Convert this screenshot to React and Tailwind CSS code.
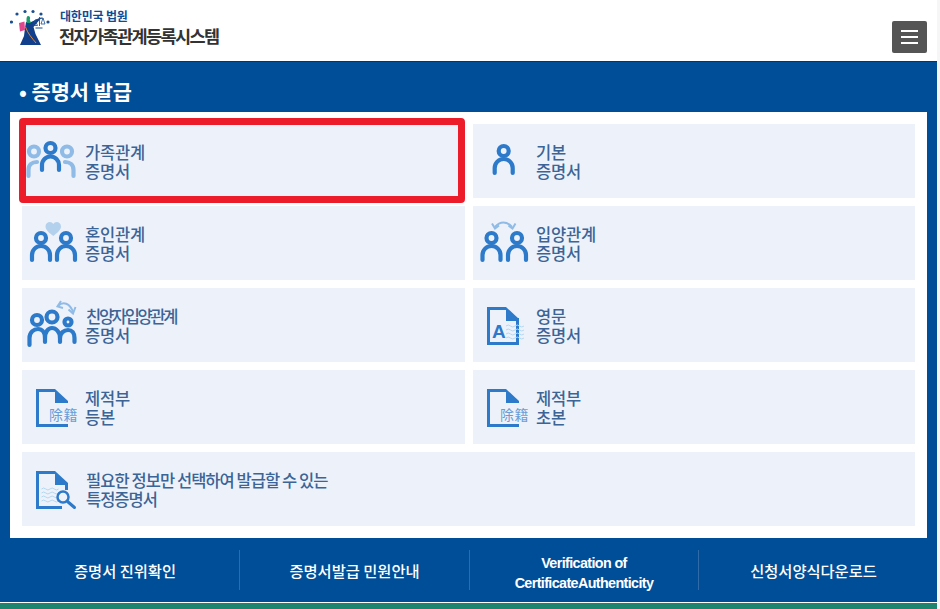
const DARK = "#2c7ac9";
const LIGHT = "#8fbbe6";
const KR = "font-['Malgun_Gothic','Noto_Sans_CJK_KR','Noto_Sans',sans-serif]";

// head ring + shoulders arch, top is the top of the head ring
function Person({ cx, top, color = DARK, r = 5, w = 9 }) {
  return (
    <g fill="none" stroke={color} strokeWidth="4.2" strokeLinecap="round">
      <circle cx={cx} cy={top + 7} r={r} />
      <path d={`M${cx - w} ${top + 29}V${top + 24}a${w} ${w} 0 0 1 ${w * 2} 0V${top + 29}`} />
    </g>
  );
}

function Doc({ right = false, end = 43 }) {
  return (
    <g>
      <path
        d={right ? `M30 20.5H12.5V55.5H41.5V30` : `M${end} 55.5H12.5V20.5H30`}
        fill="none"
        stroke={DARK}
        strokeWidth="3"
      />
      <path d="M30 19L43 31V33H30Z" fill={DARK} />
    </g>
  );
}

function Waves({ x, y, n = 4, w = 16 }) {
  const rows = Array.from({ length: n }, (_, i) => y + i * 4);
  return (
    <g fill="none" stroke="#b4d8f0" strokeWidth="1">
      {rows.map((ry) => (
        <path key={ry} d={`M${x} ${ry}q${w / 8} -2 ${w / 4} 0t${w / 4} 0t${w / 4} 0t${w / 4} 0`} />
      ))}
    </g>
  );
}

function Hanja() {
  return (
    <text x="24" y="50" fontSize="14" fill="#6a9dd6" letterSpacing="0.6" fontFamily="'Noto Sans CJK KR','Noto Sans CJK TC',sans-serif">
      除籍
    </text>
  );
}

const icons = {
  family: (
    <>
      <g fill="none" stroke={LIGHT} strokeWidth="4.2" strokeLinecap="round">
        <circle cx="9" cy="27.5" r="5" />
        <circle cx="42" cy="27.5" r="5" />
        <path d="M3.5 52V46C3.5 41 7 38 12 38" />
        <path d="M48.5 52V46C48.5 41 45 38 40 38" />
      </g>
      <Person cx={25.5} top={17} w={8.5} />
    </>
  ),
  basic: <Person cx={27.7} top={20} />,
  marriage: (
    <>
      <path d="M28.3 30C24 26.5 20.5 24 20.5 20.5C20.5 15.5 26.5 14.5 28.3 18C30 14.5 36 15.5 36 20.5C36 24 32.5 26.5 28.3 30Z" fill="#b3d0ec" />
      <Person cx={16} top={25} />
      <Person cx={41} top={25} />
    </>
  ),
  adopt: (
    <>
      <g fill="none" stroke={LIGHT} strokeWidth="2">
        <path d="M19 21C24 15 31 15 36 21" />
        <path d="M16 17.5L19 22.5L23 19.5" />
        <path d="M32.5 19.5L36.5 22.5L39.5 17.5" />
      </g>
      <Person cx={15.5} top={25} />
      <Person cx={41} top={25} />
    </>
  ),
  fullAdopt: (
    <>
      <g fill="none" stroke={LIGHT} strokeWidth="2">
        <path d="M33 18C38 13 45 15 48 24" />
        <path d="M36 13L32.5 18.5L38 20" />
        <path d="M43.5 21.5L48 25.5L50.5 19" />
      </g>
      <g fill="none" stroke={DARK} strokeWidth="4.2" strokeLinecap="round">
        <circle cx="12" cy="32" r="5" />
        <circle cx="27" cy="29" r="5.5" />
        <circle cx="43" cy="34" r="3.5" />
        <path d="M4.5 57V50C4.5 44 9 41 13 41C17 41 20 44 20 50V54" />
        <path d="M20 50C20 44 23 40 27 40C31 40 35 44 35 50V54" />
        <path d="M35 50C35 45 39 42 43 42C47 42 49.5 45 49.5 50V54" />
      </g>
    </>
  ),
  eng: (
    <>
      <Doc right />
      <text x="16" y="50" fontSize="19" fontWeight="700" fill={DARK} fontFamily="'Liberation Sans',sans-serif">
        A
      </text>
      <Waves x={30} y={38} w={18} />
    </>
  ),
  removed: (
    <>
      <Doc />
      <Hanja />
    </>
  ),
  special: (
    <>
      <Doc end={37} />
      <path d="M41.5 33V38" stroke={DARK} strokeWidth="3" />
      <Waves x={16.5} y={37} n={4} w={17} />
      <circle cx="38" cy="45" r="5.5" fill="#edf2fa" stroke={DARK} strokeWidth="2.5" />
      <path d="M42.5 49.5L49.5 55.5" stroke={DARK} strokeWidth="3" strokeLinecap="round" />
    </>
  ),
};

const cards = [
  { icon: "family", lines: ["가족관계", "증명서"], marked: true },
  { icon: "basic", lines: ["기본", "증명서"] },
  { icon: "marriage", lines: ["혼인관계", "증명서"] },
  { icon: "adopt", lines: ["입양관계", "증명서"] },
  { icon: "fullAdopt", lines: ["친양자입양관계", "증명서"], tight: true },
  { icon: "eng", lines: ["영문", "증명서"] },
  { icon: "removed", lines: ["제적부", "등본"] },
  { icon: "removed", lines: ["제적부", "초본"] },
  { icon: "special", lines: ["필요한 정보만 선택하여 발급할 수 있는", "특정증명서"], wide: true },
];

function Line({ text, className }) {
  return <span className={`block ${className}`}>{text}</span>;
}

function Card({ card }) {
  return (
    <a className={`relative flex h-[74px] items-center bg-[#edf2fa] pl-[3px] ${card.wide ? "col-span-2" : ""}`}>
      <svg width="60" height="74" viewBox="0 0 60 74" className="shrink-0">
        {icons[card.icon]}
      </svg>
      <span className="pt-[1px] text-[16.5px] font-medium leading-[19px] tracking-[-0.2px] text-[#3c6496]">
        {card.lines.map((l, i) => (
          <Line
            key={l}
            text={l}
            className={i === 0 && card.tight ? "ml-[1px] tracking-[-2.3px]" : i === 0 && card.wide ? "ml-[1px] tracking-[-0.95px]" : card.wide ? "ml-[1px] tracking-[-1px]" : ""}
          />
        ))}
      </span>
      {card.marked && (
        <span className="absolute -left-[3.5px] -top-[6.5px] right-0 -bottom-[5px] rounded-[4px] border-[7px] border-[#ed1c2b]" />
      )}
    </a>
  );
}

// court seal: arc of small round marks, the justice figure with scales
function Logo() {
  return (
    <svg width="44" height="38" viewBox="0 0 44 38" className="shrink-0">
      <g fill="#1b4f8f">
        <circle cx="1.5" cy="14" r="1.6" />
        <circle cx="7" cy="6" r="1.6" />
        <circle cx="15" cy="3.5" r="1.6" />
        <circle cx="23" cy="3.5" r="1.6" />
        <circle cx="31" cy="6" r="1.6" />
        <circle cx="38" cy="14" r="1.6" />
      </g>
      <path d="M16 14L21 14L32 9L23.5 19L25.5 26L31 37H10L14 28L15 20Z" fill="#123f8c" />
      <path d="M9 15L14.5 13.5L15 22L10 23.5Z" fill="#e0468c" />
      <path d="M18 8C20 8 20.5 10 19.8 11.5L21 15H16.5L16.5 11C16.5 9.5 17 8 18 8Z" fill="#1b9a6c" />
      <path d="M15.5 19C18 26 22 30 26 35" stroke="#e8842a" strokeWidth="1" fill="none" />
      <path d="M25 12L33 10M29.5 9V18" stroke="#1b4f8f" strokeWidth="0.9" fill="none" />
      <path d="M25 12L23.5 17.5H27.5ZM33 10L31 16H35Z" stroke="#1b4f8f" strokeWidth="0.8" fill="none" />
      <path d="M25.5 20h7" stroke="#1b4f8f" strokeWidth="1" />
    </svg>
  );
}

const links = [
  { label: "증명서 진위확인", sep: true, box: "pl-[11px]" },
  { label: "증명서발급 민원안내", sep: true, box: "" },
  { label: "Verification of CertificateAuthenticity", en: true, sep: true, box: "" },
  { label: "신청서양식다운로드", box: "pr-[9px]" },
];

export default function App() {
  return (
    <div className={`h-[609px] w-[940px] overflow-hidden bg-[#f6f6f6] ${KR}`}>
      <div className="w-[937px]">
        <header className="flex h-[62px] items-start border-b border-[#17324f] bg-white">
          <div className="ml-[10px] mt-[8px]">
            <Logo />
          </div>
          <div className="ml-[5px] mt-[8px]">
            <p className="ml-[1px] text-[12px] font-bold leading-[16px] tracking-[-0.2px] text-[#0f4c96]">대한민국 법원</p>
            <p className="mt-[1px] text-[17.5px] font-bold leading-[22px] tracking-[-1.6px] text-[#333]">전자가족관계등록시스템</p>
          </div>
          <button className="ml-auto mr-[10px] mt-[21px] flex h-[32px] w-[35px] flex-col items-center justify-center gap-[4px] rounded-[2px] bg-[#555]">
            <span className="h-[2px] w-[17px] bg-white" />
            <span className="h-[2px] w-[17px] bg-white" />
            <span className="h-[2px] w-[17px] bg-white" />
          </button>
        </header>
        <main className="bg-[#004e98] px-[10px]">
          <h2 className="flex h-[50px] items-center pl-[9px] pt-[9px] text-[20.8px] font-bold text-white">• 증명서 발급</h2>
          <div className="grid grid-cols-[443px_442px] gap-x-[8px] gap-y-[8px] bg-white px-[12px] py-[12px]">
            {cards.map((c, i) => (
              <Card key={i} card={c} />
            ))}
          </div>
          <nav className="-mx-[10px] grid h-[64px] grid-cols-[240px_230px_229px_238px] items-center">
            {links.map((l) => (
              <div
                key={l.label}
                className={`flex h-[40px] items-center justify-center text-center text-white ${l.box} ${l.sep ? "border-r border-[#2f6ba8]" : ""} ${
                  l.en ? "text-[14.3px] font-bold leading-[20px] tracking-[-0.6px] font-['Liberation_Sans',sans-serif]" : "text-[15.3px] font-medium"
                }`}
              >
                <span className={l.en ? "mt-[6px] w-[160px]" : ""}>{l.label}</span>
              </div>
            ))}
          </nav>
        </main>
        <div className="h-[7px] border-t border-white bg-[#1e8470]" />
      </div>
    </div>
  );
}
